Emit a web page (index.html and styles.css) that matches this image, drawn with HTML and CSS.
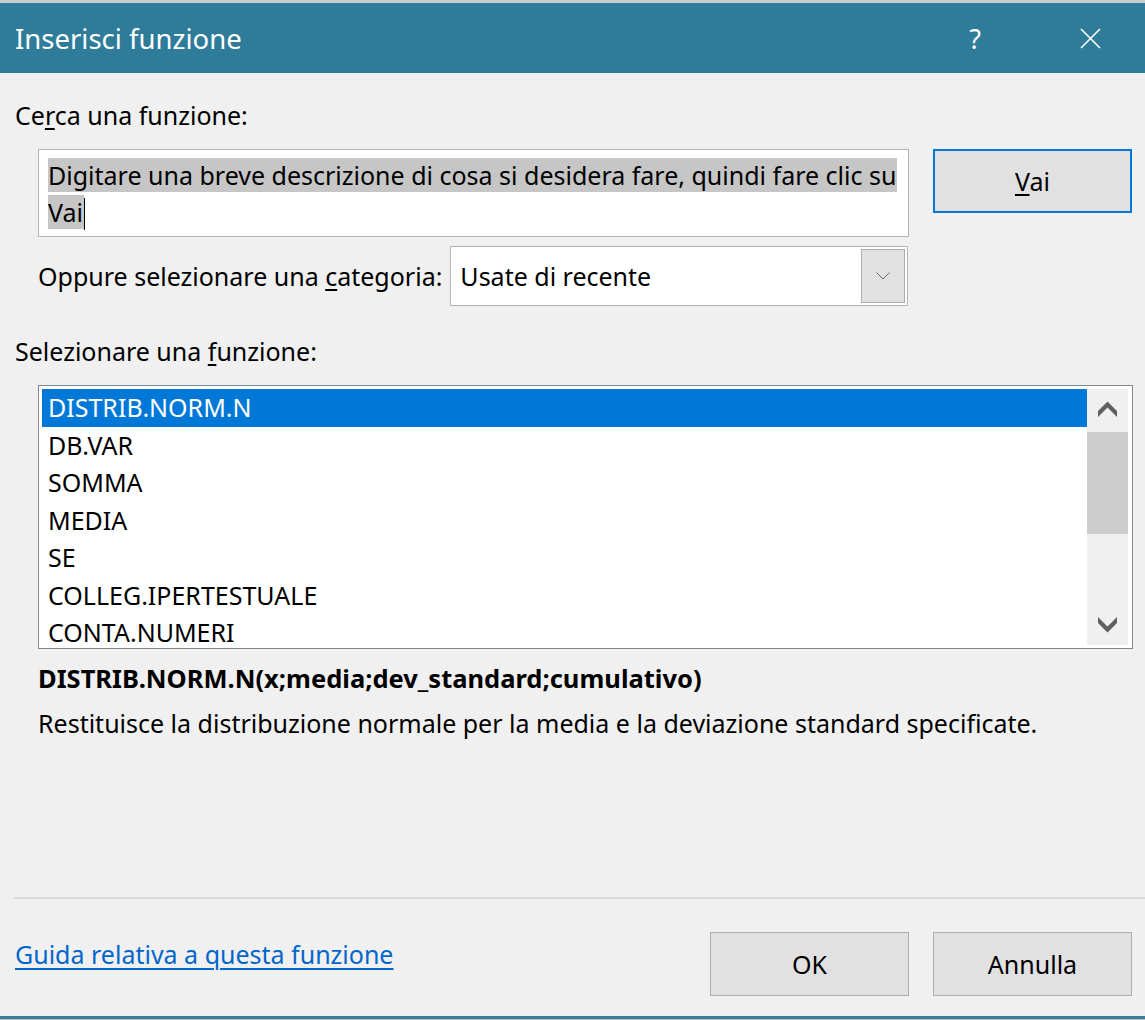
FILE: index.html
```html
<!DOCTYPE html>
<html lang="it">
<head>
<meta charset="utf-8">
<title>Inserisci funzione</title>
<link rel="stylesheet" href="styles.css">
</head>
<body>
<div class="dialog">
  <div class="topline"></div>
  <header class="titlebar">
    <span class="title">Inserisci funzione</span>
    <span class="help">?</span>
    <span class="close">
      <svg width="21" height="21" viewBox="0 0 21 21"><path d="M1 1 L20 20 M20 1 L1 20" stroke="#fff" stroke-width="1.6" fill="none"/></svg>
    </span>
  </header>
  <main class="content">
    <div class="label search-label">Ce<u>r</u>ca una funzione:</div>
    <div class="search-row">
      <div class="search-box">
        <span class="sel">Digitare una breve descrizione di cosa si desidera fare, quindi fare clic su</span><br><span class="sel">Vai</span><span class="caret"></span>
      </div>
      <button class="btn btn-go"><u>V</u>ai</button>
    </div>
    <div class="category-row">
      <span class="label">Oppure selezionare una <u>c</u>ategoria:</span>
      <div class="combo">
        <span class="combo-value">Usate di recente</span>
        <span class="combo-btn">
          <svg width="14" height="8" viewBox="0 0 14 8"><path d="M0.5 0.5 L7 7 L13.5 0.5" stroke="#666" stroke-width="1" fill="none"/></svg>
        </span>
      </div>
    </div>
    <div class="label func-label">Selezionare una <u>f</u>unzione:</div>
    <div class="listbox">
      <ul class="items">
        <li class="selected">DISTRIB.NORM.N</li>
        <li>DB.VAR</li>
        <li>SOMMA</li>
        <li>MEDIA</li>
        <li>SE</li>
        <li>COLLEG.IPERTESTUALE</li>
        <li>CONTA.NUMERI</li>
      </ul>
      <div class="scrollbar">
        <span class="arrow">
          <svg width="19" height="16" viewBox="0 0 19 16"><path d="M0 10 L9.5 0.5 L19 10 L19 16 L9.5 6.5 L0 16 Z" fill="#606060"/></svg>
        </span>
        <div class="track"><div class="thumb"></div></div>
        <span class="arrow">
          <svg width="19" height="16" viewBox="0 0 19 16"><path d="M0 0 L9.5 9.5 L19 0 L19 6 L9.5 15.5 L0 6 Z" fill="#606060"/></svg>
        </span>
      </div>
    </div>
    <div class="signature">DISTRIB.NORM.N(x;media;dev_standard;cumulativo)</div>
    <div class="description">Restituisce la distribuzione normale per la media e la deviazione standard specificate.</div>
  </main>
  <div class="separator"></div>
  <footer class="footer">
    <a class="help-link" href="#">Guida relativa a questa funzione</a>
    <div class="actions">
      <button class="btn">OK</button>
      <button class="btn">Annulla</button>
    </div>
  </footer>
  <div class="bottomline"></div>
</div>
</body>
</html>
```
FILE: styles.css
```css
* { box-sizing: border-box; }
html, body { margin: 0; padding: 0; }
body {
  width: 1145px;
  height: 1020px;
  background: #f0f0f0;
  font-family: "Noto Sans", "Open Sans", sans-serif;
  font-size: 25px;
  color: #000;
  overflow: hidden;
}
.dialog {
  display: flex;
  flex-direction: column;
  height: 1020px;
}
.topline { height: 3px; background: #c9cbcc; }
.titlebar {
  height: 70px;
  background: #2e7c9a;
  color: #fff;
  display: flex;
  align-items: center;
  padding-left: 15px;
}
.title { font-size: 27.5px; flex: 1; font-weight: 400; }
.help { font-size: 27px; width: 120px; text-align: center; }
.close { width: 110px; display: flex; justify-content: center; }
.content { padding: 0 12px 0 15px; }
.label { line-height: 30px; }
u { text-decoration-thickness: 1.5px; text-underline-offset: 3px; }
.search-label { margin-top: 27px; }
.search-row {
  display: flex;
  margin-top: 19px;
  margin-left: 23px;
  gap: 24px;
  align-items: flex-start;
}
.search-box {
  width: 871px;
  height: 88px;
  background: #fff;
  border: 1px solid #b4b4b4;
  padding: 7px 2px 0 9px;
  line-height: 37px;
  white-space: nowrap;
  overflow: hidden;
}
.sel { background: #c6c6c6; padding-right: 1px; }
.caret {
  display: inline-block;
  width: 1.5px;
  height: 32px;
  background: #000;
  vertical-align: -8px;
}
.btn {
  font-family: inherit;
  font-size: 25px;
  color: #000;
  background: #e1e1e1;
  border: 1px solid #adadad;
  width: 199px;
  height: 64px;
  padding: 0;
}
.btn-go { border: 2px solid #0078d7; }
.category-row {
  display: flex;
  align-items: center;
  margin-top: 9px;
  margin-left: 23px;
  gap: 8px;
}
.combo {
  width: 458px;
  height: 60px;
  background: #fff;
  border: 1px solid #b4b4b4;
  display: flex;
  align-items: center;
  padding: 2px 2px 2px 9px;
}
.combo-value { flex: 1; }
.combo-btn {
  width: 44px;
  height: 54px;
  background: #e1e1e1;
  border: 1px solid #adadad;
  display: flex;
  align-items: center;
  justify-content: center;
}
.func-label { margin-top: 30px; }
.listbox {
  margin-top: 19px;
  margin-left: 23px;
  width: 1095px;
  height: 264px;
  background: #fff;
  border: 1px solid #828790;
  padding: 3px 4px 3px 3px;
  display: flex;
  overflow: hidden;
}
.items {
  list-style: none;
  margin: 0;
  padding: 0;
  flex: 1;
  overflow: hidden;
}
.items li {
  height: 37.5px;
  line-height: 37px;
  padding-left: 6px;
}
.items li.selected { background: #0078d7; color: #fff; }
.scrollbar {
  width: 41px;
  background: #f0f0f0;
  display: flex;
  flex-direction: column;
  align-items: center;
}
.arrow { height: 40px; display: flex; align-items: center; justify-content: center; }
.track { flex: 1; width: 100%; }
.thumb { width: 100%; height: 102px; margin-top: 3px; background: #cdcdcd; }
.signature {
  margin-top: 14px;
  margin-left: 23px;
  font-weight: bold;
  font-size: 25.5px;
  line-height: 30px;
}
.description {
  margin-top: 15px;
  margin-left: 23px;
  line-height: 30px;
}
.separator {
  margin-top: auto;
  margin-left: 14px;
  height: 2px;
  background: #dcdcdc;
}
.footer {
  display: flex;
  align-items: flex-start;
  justify-content: space-between;
  padding: 33px 13px 20px 15px;
}
.help-link {
  margin-top: 7px;
  line-height: 30px;
  color: #0066cc;
  text-decoration: underline;
  text-underline-offset: 4px;
  text-decoration-thickness: 1.5px;
}
.actions { display: flex; gap: 24px; }
.bottomline { height: 4px; background: #3a7f9a; border-bottom: 1px solid #b8c4c8; }
```
